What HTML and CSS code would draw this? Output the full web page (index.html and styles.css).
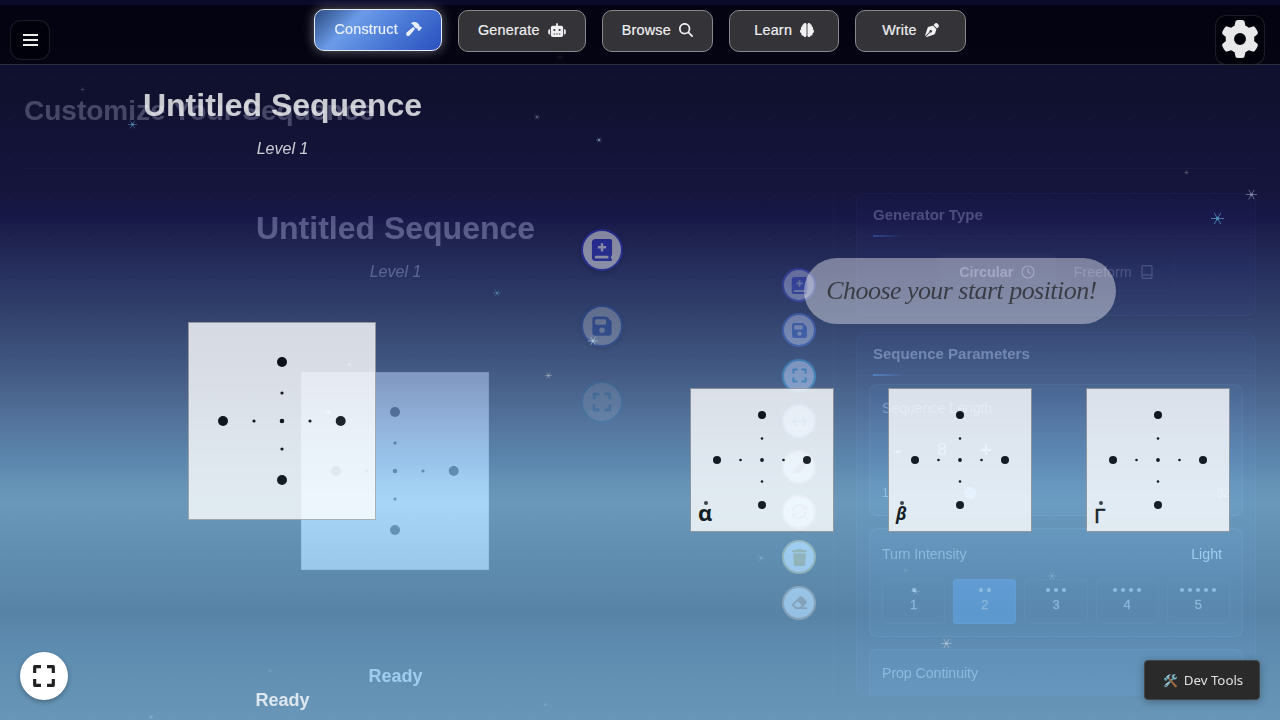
FILE: index.html
```html
<!DOCTYPE html>
<html lang="en">
<head>
<meta charset="utf-8">
<title>Construct</title>
<link rel="stylesheet" href="styles.css">
</head>
<body>
<svg class="defs" width="0" height="0">
  <defs>
    <symbol id="hammer" viewBox="0 0 576 512"><path d="M413.5 237.5c-28.2 4.8-58.2-3.6-80-25.4l-38.1-38.1C280.4 159 272 138.8 272 117.6V105.5L192.3 62c-5.3-2.9-8.6-8.6-8.3-14.7s3.9-11.5 9.5-14l47.2-21C259.1 4.2 279 0 299.2 0h18.1c36.7 0 72 14 98.7 39.1l44.6 42c24.2 22.8 33.2 55.7 26.6 86L503 183l8-8c9.4-9.4 24.6-9.4 33.9 0l24 24c9.4 9.4 9.4 24.6 0 33.9l-88 88c-9.4 9.4-24.6 9.4-33.9 0l-24-24c-9.4-9.4-9.4-24.6 0-33.9l8-8-17.5-17.5zM27.4 377.1L260.9 182.6c3.5 4.9 7.5 9.6 11.8 14l38.1 38.1c6 6 12.4 11.2 19.2 15.7L134.9 484.6c-14.5 17.4-36 27.4-58.6 27.4C34.1 512 0 477.8 0 435.7c0-22.6 10.1-44.1 27.4-58.6z"/></symbol>
    <symbol id="robot" viewBox="0 0 640 512"><path d="M320 0c17.7 0 32 14.3 32 32V96H472c39.8 0 72 32.2 72 72V440c0 39.8-32.2 72-72 72H168c-39.8 0-72-32.2-72-72V168c0-39.8 32.2-72 72-72H288V32c0-17.7 14.3-32 32-32zM208 384c-8.8 0-16 7.2-16 16s7.2 16 16 16h32c8.8 0 16-7.2 16-16s-7.2-16-16-16H208zm96 0c-8.8 0-16 7.2-16 16s7.2 16 16 16h32c8.8 0 16-7.2 16-16s-7.2-16-16-16H304zm96 0c-8.8 0-16 7.2-16 16s7.2 16 16 16h32c8.8 0 16-7.2 16-16s-7.2-16-16-16H400zM264 256a40 40 0 1 0 -80 0 40 40 0 1 0 80 0zm152 40a40 40 0 1 0 0-80 40 40 0 1 0 0 80zM48 224H64V416H48c-26.5 0-48-21.5-48-48V272c0-26.5 21.5-48 48-48zm544 0c26.5 0 48 21.5 48 48v96c0 26.5-21.5 48-48 48H576V224h16z"/></symbol>
    <symbol id="search" viewBox="0 0 512 512"><path d="M416 208c0 45.9-14.9 88.3-40 122.7L502.6 457.4c12.5 12.5 12.5 32.8 0 45.3s-32.8 12.5-45.3 0L330.7 376c-34.4 25.2-76.8 40-122.7 40C93.1 416 0 322.9 0 208S93.1 0 208 0S416 93.1 416 208zM208 352a144 144 0 1 0 0-288 144 144 0 1 0 0 288z"/></symbol>
    <symbol id="brain" viewBox="0 0 512 512"><path d="M184 0c30.9 0 56 25.1 56 56V456c0 30.9-25.1 56-56 56c-28.9 0-52.7-21.9-55.7-50.1c-5.2 1.4-10.7 2.1-16.3 2.1c-35.3 0-64-28.7-64-64c0-7.4 1.3-14.6 3.6-21.2C21.4 367.4 0 338.2 0 304c0-31.9 18.7-59.5 45.8-72.3C37.1 220.8 32 207 32 192c0-30.7 21.6-56.3 50.4-62.6C80.8 123.9 80 118 80 112c0-29.9 20.6-55.1 48.3-62.1C131.3 21.9 155.1 0 184 0zM328 0c28.9 0 52.6 21.9 55.7 49.9c27.8 7 48.3 32.1 48.3 62.1c0 6-.8 11.9-2.4 17.4c28.8 6.2 50.4 31.9 50.4 62.6c0 15-5.1 28.8-13.8 39.7C493.3 244.5 512 272.1 512 304c0 34.2-21.4 63.4-51.6 74.8c2.3 6.6 3.6 13.8 3.6 21.2c0 35.3-28.7 64-64 64c-5.6 0-11.1-.7-16.3-2.1c-3 28.2-26.8 50.1-55.7 50.1c-30.9 0-56-25.1-56-56V56c0-30.9 25.1-56 56-56z"/></symbol>
    <symbol id="nib" viewBox="0 0 512 512"><path d="M368.4 18.3L312.7 74.1 437.9 199.3l55.7-55.7c21.9-21.9 21.9-57.3 0-79.2L447.6 18.3c-21.9-21.9-57.3-21.9-79.2 0zM288 94.6l-9.2 2.8L134.7 140.6c-19.9 6-35.7 21.2-42.3 41L3.8 445.8c-3.8 11.3-1 23.9 7.3 32.4L164.7 324.7c-3-6.3-4.7-13.3-4.7-20.7c0-26.5 21.5-48 48-48s48 21.5 48 48s-21.5 48-48 48c-7.4 0-14.4-1.7-20.7-4.7L33.7 500.9c8.6 8.3 21.1 11.2 32.4 7.3l264.3-88.6c19.7-6.6 35-22.4 41-42.3l43.2-144.1 2.8-9.2L288 94.6z"/></symbol>
    <symbol id="gear" viewBox="0 0 512 512"><path d="M495.9 166.6c3.2 8.7 .5 18.4-6.4 24.6l-43.3 39.4c1.1 8.3 1.7 16.8 1.7 25.4s-.6 17.1-1.7 25.4l43.3 39.4c6.9 6.2 9.6 15.9 6.4 24.6c-4.4 11.9-9.7 23.3-15.8 34.3l-4.7 8.1c-6.6 11-14 21.4-22.1 31.2c-5.9 7.2-15.7 9.6-24.5 6.8l-55.7-17.7c-13.4 10.3-28.2 18.9-44 25.4l-12.5 57.1c-2 9.1-9 16.3-18.2 17.8c-13.8 2.3-28 3.5-42.5 3.5s-28.7-1.2-42.5-3.5c-9.2-1.5-16.2-8.7-18.2-17.8l-12.5-57.1c-15.8-6.5-30.6-15.1-44-25.4L83.1 425.9c-8.8 2.8-18.6 .3-24.5-6.8c-8.1-9.8-15.5-20.2-22.1-31.2l-4.7-8.1c-6.1-11-11.4-22.4-15.8-34.3c-3.2-8.7-.5-18.4 6.4-24.6l43.3-39.4C64.6 273.1 64 264.6 64 256s.6-17.1 1.7-25.4L22.4 191.2c-6.9-6.2-9.6-15.9-6.4-24.6c4.4-11.9 9.7-23.3 15.8-34.3l4.7-8.1c6.6-11 14-21.4 22.1-31.2c5.9-7.2 15.7-9.6 24.5-6.8l55.7 17.7c13.4-10.3 28.2-18.9 44-25.4l12.5-57.1c2-9.1 9-16.3 18.2-17.8C227.3 1.2 241.5 0 256 0s28.7 1.2 42.5 3.5c9.2 1.5 16.2 8.7 18.2 17.8l12.5 57.1c15.8 6.5 30.6 15.1 44 25.4l55.7-17.7c8.8-2.8 18.6-.3 24.5 6.8c8.1 9.8 15.5 20.2 22.1 31.2l4.7 8.1c6.1 11 11.4 22.4 15.8 34.3zM256 336a80 80 0 1 0 0-160 80 80 0 1 0 0 160z"/></symbol>
    <symbol id="book" viewBox="0 0 24 24"><path fill-rule="evenodd" d="M5 0H21Q23 0 23 2V17Q23 18.500 21.700 19V21Q23 21.200 23 22.500Q23 24 21.500 24H5Q1 24 1 20V4Q1 0 5 0ZM10.700 4.500V7.700H7.500V10.300H10.700V13.500H13.300V10.300H16.500V7.700H13.300V4.500ZM5.500 18.300Q4 18.300 4 19.800T5.500 21.300H19V18.300Z"/></symbol>
    <symbol id="save" viewBox="0 0 448 512"><path d="M64 32C28.700 32 0 60.700 0 96V416c0 35.300 28.700 64 64 64H384c35.300 0 64-28.700 64-64V173.300c0-17-6.700-33.300-18.700-45.300L352 50.700C340 38.700 323.700 32 306.700 32H64zm0 96c0-17.700 14.300-32 32-32H288c17.700 0 32 14.300 32 32v64c0 17.700-14.300 32-32 32H96c-17.700 0-32-14.300-32-32V128zM224 288a64 64 0 1 1 0 128 64 64 0 1 1 0-128z"/></symbol>
    <symbol id="expand" viewBox="0 0 24 24"><path fill="none" stroke="currentColor" stroke-width="2.900" stroke-linejoin="round" d="M3.400 9.200V3.400H9.200M14.800 3.400H20.600V9.200M20.600 14.800V20.600H14.800M9.200 20.600H3.400V14.800"/></symbol>
    <symbol id="arrows" viewBox="0 0 24 24"><path fill="none" stroke="currentColor" stroke-width="2.800" stroke-linecap="round" stroke-linejoin="round" d="M2 12H22M7 7L2 12L7 17M17 7L22 12L17 17"/></symbol>
    <symbol id="brush" viewBox="0 0 576 512"><path d="M339.300 367.100c27.300-3.900 51.900-19.400 67.200-42.900L568.200 74.100c12.600-19.500 9.400-45.300-7.600-61.200S517.700-4.400 499.100 9.600L262.400 187.200c-24 18-38.200 46.100-38.400 76.100L339.300 367.100zm-19.600 25.400l-116-104.400C143.900 290.300 96 339.600 96 400c0 3.900 .2 7.800 .6 11.600C98.400 429.100 86.400 448 68.800 448H64c-17.700 0-32 14.300-32 32s14.300 32 32 32H208c61.900 0 112-50.100 112-112c0-2.500-.1-5-.2-7.500z"/></symbol>
    <symbol id="rotate" viewBox="0 0 24 24"><path fill="none" stroke="currentColor" stroke-width="3" stroke-linecap="round" d="M3 10.500A9.200 9.200 0 0 1 19 6.200M21 13.500A9.200 9.200 0 0 1 5 17.800"/><path d="M22.500 2V10H14.500ZM1.500 22V14H9.500Z"/></symbol>
    <symbol id="trash" viewBox="0 0 448 512"><path d="M135.200 17.700C140.600 6.800 151.700 0 163.800 0H284.200c12.100 0 23.200 6.800 28.600 17.700L320 32h96c17.700 0 32 14.300 32 32s-14.300 32-32 32H32C14.300 96 0 81.700 0 64S14.300 32 32 32h96l7.200-14.300zM32 128H416L394.800 467c-1.600 25.300-22.600 45-47.900 45H101.100c-25.300 0-46.300-19.700-47.900-45L32 128z"/></symbol>
    <symbol id="eraser" viewBox="0 0 576 512"><path d="M290.700 57.400L57.400 290.700c-25 25-25 65.500 0 90.500l80 80c12 12 28.300 18.700 45.300 18.700H288h9.400H512c17.700 0 32-14.300 32-32s-14.300-32-32-32H387.900L518.600 285.300c25-25 25-65.500 0-90.500L381.300 57.400c-25-25-65.500-25-90.500 0zM297.400 416H288l-105.400 0-80-80L227.300 211.300 364.700 348.700 297.400 416z"/></symbol>
    <symbol id="star" viewBox="-10 -10 20 20"><path stroke="currentColor" stroke-width="1.300" d="M-10 0H10M-5-8.500L5 8.500M-5 8.500L5-8.500"/><circle r="2.800"/></symbol>
    <symbol id="beat" viewBox="0 0 188 198"><circle cx="94" cy="40" r="5"/><circle cx="94" cy="158" r="5"/><circle cx="35" cy="99" r="5"/><circle cx="152.700" cy="99" r="5"/><circle cx="94" cy="99" r="2.300"/><circle cx="94" cy="71" r="1.600"/><circle cx="94" cy="127" r="1.600"/><circle cx="66" cy="99" r="1.600"/><circle cx="122" cy="99" r="1.600"/></symbol>
    <symbol id="pos" viewBox="0 0 144 144"><circle cx="72" cy="27" r="4"/><circle cx="72" cy="117" r="4"/><circle cx="27" cy="72" r="4"/><circle cx="117" cy="72" r="4"/><circle cx="72" cy="72" r="1.900"/><circle cx="72" cy="50.500" r="1.300"/><circle cx="72" cy="93.500" r="1.300"/><circle cx="50.500" cy="72" r="1.300"/><circle cx="93.500" cy="72" r="1.300"/></symbol>
  </defs>
</svg>

<div class="app">
  <svg class="stars" viewBox="0 0 1280 720">
    <use href="#star" x="128" y="120" width="9" height="9" color="#4d86ac"/>
    <use href="#star" x="80" y="87" width="5" height="5" color="#56566f"/>
    <use href="#star" x="534" y="114" width="6" height="6" color="#6c6c88"/>
    <use href="#star" x="596" y="137" width="6" height="6" color="#8ba5ba"/>
    <use href="#star" x="555" y="52" width="10" height="10" color="#4a4a5c"/>
    <use href="#star" x="1184" y="170" width="5" height="5" color="#77737f"/>
    <use href="#star" x="1246" y="189" width="11" height="11" color="#7f83a0"/>
    <use href="#star" x="1211" y="212" width="13" height="13" color="#4d8ab0"/>
    <use href="#star" x="493" y="289" width="8" height="8" color="#4d80a5"/>
    <use href="#star" x="545" y="372" width="7" height="7" color="#a9b2c4"/>
    <use href="#star" x="347" y="362" width="5" height="5" color="#a0b0c8"/>
    <use href="#star" x="325" y="409" width="7" height="7" color="#9fb0cc"/>
    <use href="#star" x="757" y="554" width="8" height="8" color="#81a9c8"/>
    <use href="#star" x="829" y="511" width="8" height="8" color="#7da8c6"/>
    <use href="#star" x="903" y="568" width="5" height="5" color="#7fa5c0"/>
    <use href="#star" x="911" y="587" width="9" height="9" color="#80a5c2"/>
    <use href="#star" x="1047" y="571" width="10" height="10" color="#71a5c5"/>
    <use href="#star" x="941" y="638" width="11" height="11" color="#a5bbca"/>
    <use href="#star" x="148" y="714" width="6" height="6" color="#8fb5d0"/>
    <use href="#star" x="267" y="668" width="6" height="6" color="#72a2c4"/>
    <use href="#star" x="543" y="702" width="5" height="5" color="#8bafc8"/>
  </svg>

  <!-- Generate tab, fading out -->
  <section class="layer generate">
    <h1 class="gen-title">Customize Your Sequence</h1>
    <div class="gen-body">
      <div class="workspace gen-work">
        <div class="sequence">
          <h2 class="seq-title">Untitled Sequence</h2>
          <div class="level">Level 1</div>
          <div class="beat"><svg><use href="#beat"/></svg></div>
          <div class="ready">Ready</div>
        </div>
        <div class="tools small">
          <span class="tool c-book"><svg><use href="#book"/></svg></span>
          <span class="tool c-save"><svg><use href="#save"/></svg></span>
          <span class="tool c-expand"><svg><use href="#expand"/></svg></span>
          <span class="tool c-arrows"><svg><use href="#arrows"/></svg></span>
          <span class="tool c-brush"><svg><use href="#brush"/></svg></span>
          <span class="tool c-rotate"><svg><use href="#rotate"/></svg></span>
          <span class="tool c-trash"><svg><use href="#trash"/></svg></span>
          <span class="tool c-eraser"><svg><use href="#eraser"/></svg></span>
        </div>
      </div>
      <div class="settings">
        <div class="panel type">
          <h3>Generator Type</h3>
          <div class="switch">
            <span class="on">Circular <svg viewBox="0 0 14 14"><circle cx="7" cy="7" r="6"/><path d="M7 3.500V7L9.500 8.500"/></svg></span>
            <span class="off">Freeform <svg viewBox="0 0 14 14"><rect x="2" y=".7" width="10" height="12.600" rx="1"/><path d="M2 10H12"/></svg></span>
          </div>
        </div>
        <div class="panel params">
          <h3>Sequence Parameters</h3>
          <div class="box length">
            <div class="label">Sequence Length</div>
            <div class="stepper"><b>-</b><span>8</span><b>+</b></div>
            <div class="range"><span>1</span><i></i><span>32</span></div>
          </div>
          <div class="box turn">
            <div class="row"><span class="label">Turn Intensity</span><span class="light">Light</span></div>
            <div class="levels">
              <div><p><i></i></p>1</div>
              <div class="sel"><p><i></i><i></i></p>2</div>
              <div><p><i></i><i></i><i></i></p>3</div>
              <div><p><i></i><i></i><i></i><i></i></p>4</div>
              <div><p><i></i><i></i><i></i><i></i><i></i></p>5</div>
            </div>
          </div>
          <div class="box prop"><div class="label">Prop Continuity</div></div>
        </div>
      </div>
    </div>
  </section>

  <!-- Construct tab, fading in -->
  <section class="layer construct">
    <div class="workspace con-work">
      <div class="sequence">
        <h2 class="seq-title">Untitled Sequence</h2>
        <div class="level">Level 1</div>
        <div class="beat"><svg><use href="#beat"/></svg></div>
        <div class="ready">Ready</div>
      </div>
      <div class="tools large">
        <span class="tool c-book"><svg><use href="#book"/></svg></span>
        <span class="tool c-save"><svg><use href="#save"/></svg></span>
        <span class="tool c-expand"><svg><use href="#expand"/></svg></span>
      </div>
    </div>
    <div class="picker">
      <div class="prompt">Choose your start position!</div>
      <div class="positions">
        <div class="position"><svg><use href="#pos"/></svg><span class="glyph alpha">α</span></div>
        <div class="position"><svg><use href="#pos"/></svg><span class="glyph beta">β</span></div>
        <div class="position"><svg><use href="#pos"/></svg><span class="glyph gamma">Γ</span></div>
      </div>
    </div>
    <svg class="stars" viewBox="0 0 1280 720"><use href="#star" x="588" y="336" width="10" height="10" color="#9fc0d4"/></svg>
  </section>

  <header class="topbar">
    <button class="square menu"><i></i><i></i><i></i></button>
    <nav class="tabs">
      <a class="tab active">Construct <svg class="mid"><use href="#hammer"/></svg></a>
      <a class="tab">Generate <svg class="wide"><use href="#robot"/></svg></a>
      <a class="tab">Browse <svg><use href="#search"/></svg></a>
      <a class="tab">Learn <svg><use href="#brain"/></svg></a>
      <a class="tab">Write <svg><use href="#nib"/></svg></a>
    </nav>
    <button class="square gear"><svg><use href="#gear"/></svg></button>
  </header>

  <button class="fullscreen"><svg><use href="#expand"/></svg></button>
  <button class="dev"><span>🛠️</span> Dev Tools</button>
</div>
</body>
</html>
```
FILE: styles.css
```css
* { box-sizing: border-box; }
body { margin: 0; font-family: "Liberation Sans", Arial, sans-serif; color: #fff; }
h1, h2, h3, p { margin: 0; }
button { font: inherit; padding: 0; }
svg { fill: currentColor; display: block; }
.defs { position: absolute; }
.app {
  position: relative; width: 1280px; height: 720px; overflow: hidden; isolation: isolate;
  background:
    radial-gradient(circle at 10px 40px, rgba(255,255,255,.04) 1px, transparent 1.500px) 0 0 / 40px 40px,
    linear-gradient(#0a0a2a 0, #101030 65px, #10112e 95px, #131338 140px, #15153c 190px, #181848 217px, #1e214e 236px, #262f5e 270px, #31406b 312px, #3d537d 355px, #48628b 388px, #5678a0 430px, #5a84ab 455px, #6593b6 485px, #6998ba 503px, #5f8db0 560px, #5783a6 613px, #5e8cb0 650px, #6896b8 720px);
}
.stars, .layer { position: absolute; inset: 0; }

/* top bar */
.topbar {
  position: absolute; inset: 5px 0 auto 0; height: 60px; padding: 0 15px 0 10px;
  display: flex; justify-content: space-between; align-items: flex-start;
  background: rgba(0,0,8,.72); border-bottom: 1px solid rgba(255,255,255,.17);
}
.square { border: 1px solid rgba(255,255,255,.1); border-radius: 11px; background: rgba(0,0,8,.55); color: #e8e8ea; }
.menu { width: 40px; height: 40px; margin-top: 15px; display: flex; flex-direction: column; align-items: center; justify-content: center; gap: 3px; }
.menu i { width: 15px; height: 2px; background: #eee; }
.gear { width: 50px; height: 50px; margin-top: 10px; display: grid; place-items: center; }
.gear svg { width: 38px; height: 38px; margin-bottom: 3px; }
.tabs { display: flex; gap: 16px; margin: 5px 0 0 15px; }
.tab {
  height: 42px; min-width: 110.300px; padding: 0 19px 2px; display: flex; align-items: center; justify-content: center; gap: 8px;
  font-size: 14.400px; letter-spacing: .22px; -webkit-text-stroke: .2px;
  color: #f0f0f2; background: #343338; border: 1px solid #89898d; border-radius: 10px;
}
.tab svg { width: 14px; height: 14px; }
.tab .mid { width: 16px; }
.tab .wide { width: 18px; }
.tab.active {
  transform: translateY(-1px); border-color: #e6ecfa; color: #e8f0ff;
  background: linear-gradient(135deg, #2a4a80 0, #6b9be8 30%, #4b7ad6 60%, #2a50be 100%);
  box-shadow: 0 0 12px rgba(255,255,255,.4);
}

/* shared workspace */
.workspace { display: flex; }
.sequence { display: flex; flex-direction: column; align-items: center; }
.seq-title { font-size: 32px; line-height: 38px; white-space: nowrap; }
.level { font-size: 16px; line-height: 20px; font-style: italic; margin-top: 15px; }
.beat { width: 188px; height: 198px; background: #fff; border: 1px solid #ccc; color: #000; margin-right: 1px; }
.beat svg { width: 188px; height: 198px; margin: -1px; }
.ready { font-size: 18px; line-height: 22px; font-weight: bold; }
.tools { display: flex; flex-direction: column; }
.tool { display: grid; place-items: center; border-radius: 50%; background: #fff; border: 2px solid currentColor; }
.c-book { color: #2c35d0; }
.c-save { color: #2457d0; }
.c-expand { color: #0098d0; }
.c-arrows { color: #6898c8; }
.c-brush { color: #b06878; }
.c-rotate { color: #b86898; }
.c-trash { color: #d0a030; }
.c-eraser { color: #b87848; }

/* generate layer */
.generate { opacity: .24; mix-blend-mode: plus-lighter; padding: 65px 24px 24px; display: flex; flex-direction: column; }
.gen-title { font-size: 28px; height: 104px; line-height: 91px; border-bottom: 1px solid rgba(255,255,255,.09); color: #ddd; }
.gen-body { display: flex; padding-top: 24px; height: 527px; }
.gen-work { width: 810px; border-right: 1px solid rgba(255,255,255,.04); margin-right: 22px; }
.gen-work .sequence { width: 743px; padding-top: 16px; }
.gen-work .level { opacity: .85; }
.gen-work .beat { margin-top: 90px; border-color: #ddd; }
.gen-work .ready { margin-top: 95px; }
.small { padding-top: 75px; gap: 11.400px; margin-left: 15px; }
.small .tool { width: 34px; height: 34px; }
.small svg { width: 17px; height: 17px; }
.settings { width: 400px; display: flex; flex-direction: column; gap: 16px; }
.panel { border: 1px solid rgba(255,255,255,.07); border-radius: 10px; background: rgba(40,60,220,.06); }
.panel h3 { font-size: 15px; line-height: 20px; height: 43px; padding: 11px 0 0 16px; color: #ddd; border-bottom: 1px solid rgba(255,255,255,.05); position: relative; }
.panel h3::after { content: ""; position: absolute; left: 16px; bottom: -1px; width: 30px; height: 2px; background: linear-gradient(90deg, #3a9bff, transparent); }
.type { height: 123px; }
.switch { display: flex; width: 239px; height: 43px; margin: 16px 0 0 79px; padding: 0 2px 6px; border: 1px solid rgba(255,255,255,.04); border-radius: 8px; font-size: 14.300px; }
.switch span { display: flex; align-items: center; justify-content: center; gap: 8px; width: 117px; height: 35px; }
.switch svg { width: 14px; height: 14px; fill: none; stroke: currentColor; stroke-width: 1.200; }
.switch .on { font-weight: bold; background: rgba(255,255,255,.06); border-radius: 6px; }
.switch .off { opacity: .6; }
.params { height: 365px; overflow: hidden; border-bottom: 0; display: flex; flex-direction: column; }
.params h3 { flex: none; }
.box { flex: none; margin: 0 12px 12px; padding: 0 12px; border: 1px solid rgba(255,255,255,.11); border-radius: 8px; background: rgba(60,130,255,.08); }
.label { font-size: 14.200px; letter-spacing: -.07px; color: #b4b4b4; }
.length { margin-top: 8px; height: 132px; }
.length .label { line-height: 46px; color: #ccc; }
.stepper { display: flex; align-items: center; height: 39px; font-size: 20px; font-weight: bold; }
.stepper b { width: 32px; text-align: center; }
.stepper span { width: 56px; text-align: center; font-size: 17px; font-weight: normal; }
.range { display: flex; align-items: center; height: 46px; font-size: 12px; color: #aaa; }
.range i { width: 12px; height: 12px; border-radius: 50%; background: #60a8ff; margin: 0 auto 0 75px; }
.turn { height: 109px; }
.turn .row { display: flex; justify-content: space-between; align-items: center; height: 50px; padding-right: 8px; }
.light { font-size: 14.200px; }
.levels { display: flex; gap: 8px; }
.levels div { flex: 1; height: 45px; border: 1px solid rgba(255,255,255,.07); border-radius: 4px; font-size: 13px; line-height: 17px; text-align: center; color: #ccc; -webkit-text-stroke: .3px; }
.levels .sel { background: rgba(30,130,255,.6); }
.levels p { display: flex; gap: 4px; justify-content: center; padding-top: 8px; height: 16px; }
.levels i { width: 4px; height: 4px; border-radius: 50%; background: #ddd; }
.prop { height: 109px; }
.prop .label { line-height: 46px; }

/* construct layer */
.construct { display: flex; }
.con-work { width: 640px; }
.con-work .sequence { width: 565px; padding-top: 86px; }
.con-work .seq-title, .con-work .level, .con-work .ready { opacity: .78; }
.con-work .beat { margin-top: 163px; opacity: .8; border-color: #aaa; }
.con-work .ready { margin-top: 169px; }
.large { padding-top: 229px; gap: 34px; margin-left: 16px; }
.large .tool { width: 42px; height: 42px; }
.large svg { width: 22px; height: 22px; }
.large .c-book { opacity: .46; box-shadow: 0 2px 5px rgba(0,0,0,.4); }
.large .c-save { opacity: .24; box-shadow: 0 2px 5px rgba(0,0,0,.4); }
.large .c-expand { opacity: .1; }
.picker { width: 640px; display: flex; flex-direction: column; align-items: center; padding-top: 258px; }
.prompt { width: 312px; height: 66px; padding-left: 3px; border-radius: 33px; display: grid; place-items: center; white-space: nowrap; background: rgba(255,255,255,.4); color: rgba(30,30,30,.72); font: italic 26px "Monotype Corsiva", "Z003", "Liberation Serif", serif; letter-spacing: -.55px; }
.positions { display: flex; gap: 54px; margin-top: 64px; }
.position { width: 144px; height: 144px; position: relative; background: #fff; border: 1px solid #999; color: #000; opacity: .8; }
.position svg { width: 144px; height: 144px; margin: -1px; }
.glyph { position: absolute; left: 7px; bottom: 6px; font: bold 22px/26px "Open Sans", sans-serif; color: #000; }
.glyph::before { content: ""; position: absolute; left: 6px; top: 2px; width: 4px; height: 4px; border-radius: 50%; background: #333; }
.beta { font-size: 17px; font-style: italic; bottom: 4px; left: 7px; }
.beta::before { left: 4px; top: 0; }
.gamma { font: 20px/26px "DejaVu Sans", sans-serif; bottom: 2px; left: 7px; -webkit-text-stroke: .4px; }
.gamma::before { left: 5px; top: -2px; }

/* floating buttons */
.fullscreen { position: absolute; left: 20px; bottom: 20px; width: 48px; height: 48px; border: 0; border-radius: 50%; background: #fff; color: #222; display: grid; place-items: center; box-shadow: 0 2px 5px rgba(0,0,0,.3); }
.fullscreen svg { width: 26px; height: 26px; }
.dev { position: absolute; right: 20px; bottom: 20px; width: 116px; height: 40px; padding-left: 2px; display: flex; align-items: center; justify-content: center; gap: 6px; background: #2a2a2a; border: 1px solid #444; border-radius: 4px; color: #e0e0e0; font: 13.300px "Noto Sans", sans-serif; box-shadow: 0 2px 8px rgba(0,0,0,.3); }
.dev span { font-size: 12px; }
```
